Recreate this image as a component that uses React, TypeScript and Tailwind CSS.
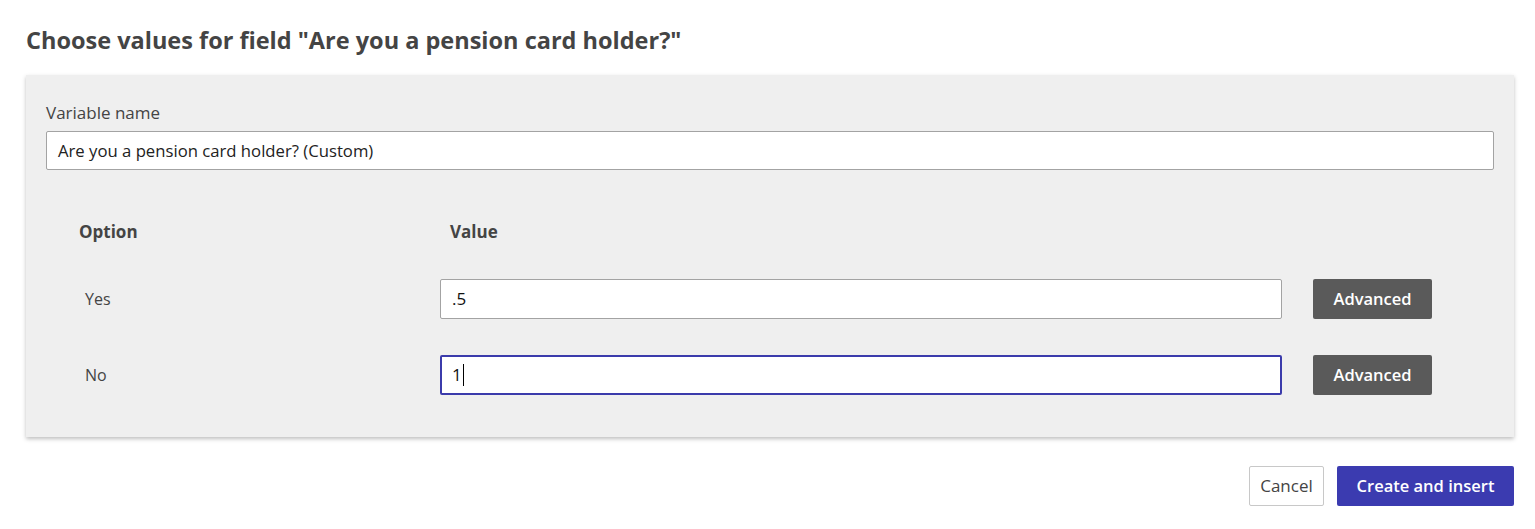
import React from "react";

const body = { fontFamily: "'Open Sans', 'Noto Sans', sans-serif" };

const rows = [
  { option: "Yes", value: ".5", focused: false },
  { option: "No", value: "1", focused: true },
];

export default function App() {
  return (
    <div className="w-[1535px] h-[529px] bg-white text-[#444]" style={body}>
      <div className="pl-[26px] pr-[21px] pt-[24px]">
        <h1 className="text-[23.5px] leading-[32px] font-bold text-[#444]">
          Choose values for field "Are you a pension card holder?"
        </h1>

        <div className="mt-[19px] bg-[#efefef] shadow-[0_2px_4px_rgba(0,0,0,0.25)] px-[20px] pt-[26px] pb-[42px]">
          <label className="block text-[17px] leading-[24px] text-[#444]">Variable name</label>
          <div className="mt-[6px] h-[39px] bg-white border border-[#a3a3a3] rounded-[2px] flex items-center px-[11px] text-[16.7px] text-[#222]">
            Are you a pension card holder? (Custom)
          </div>

          <div className="pl-[33px] mt-[50px]">
            <div className="flex items-center h-[24px] font-bold text-[17px] text-[#444]">
              <div className="w-[361px]">Option</div>
              <div className="pl-[10px]">Value</div>
            </div>
            {rows.map((r, i) => (
              <div key={r.option} className={`flex items-center ${i === 0 ? "mt-[35px]" : "mt-[36px]"}`}>
                <div className="w-[361px] pl-[6px] text-[16px] text-[#444]">{r.option}</div>
                <div
                  className={`w-[842px] h-[40px] bg-white rounded-[2px] flex items-center text-[17px] text-[#111] ${
                    r.focused ? "border-2 border-[#3b3bab] pl-[10px]" : "border border-[#a3a3a3] pl-[11px]"
                  }`}
                >
                  {r.value}
                  {r.focused && <span className="ml-px inline-block w-px h-[22px] bg-black" />}
                </div>
                <button className="ml-[31px] w-[119px] h-[40px] bg-[#5a5a5a] text-white rounded-[2px] text-[16.5px] font-semibold">
                  Advanced
                </button>
              </div>
            ))}
          </div>
        </div>

        <div className="flex justify-end gap-[13px] mt-[29px]">
          <button className="w-[75px] h-[40px] bg-white border border-[#c8c8c8] rounded-[2px] text-[17px] text-[#444]">
            Cancel
          </button>
          <button className="w-[177px] h-[40px] bg-[#3b3bb0] text-white rounded-[2px] text-[16.5px] font-semibold">
            Create and insert
          </button>
        </div>
      </div>
    </div>
  );
}
